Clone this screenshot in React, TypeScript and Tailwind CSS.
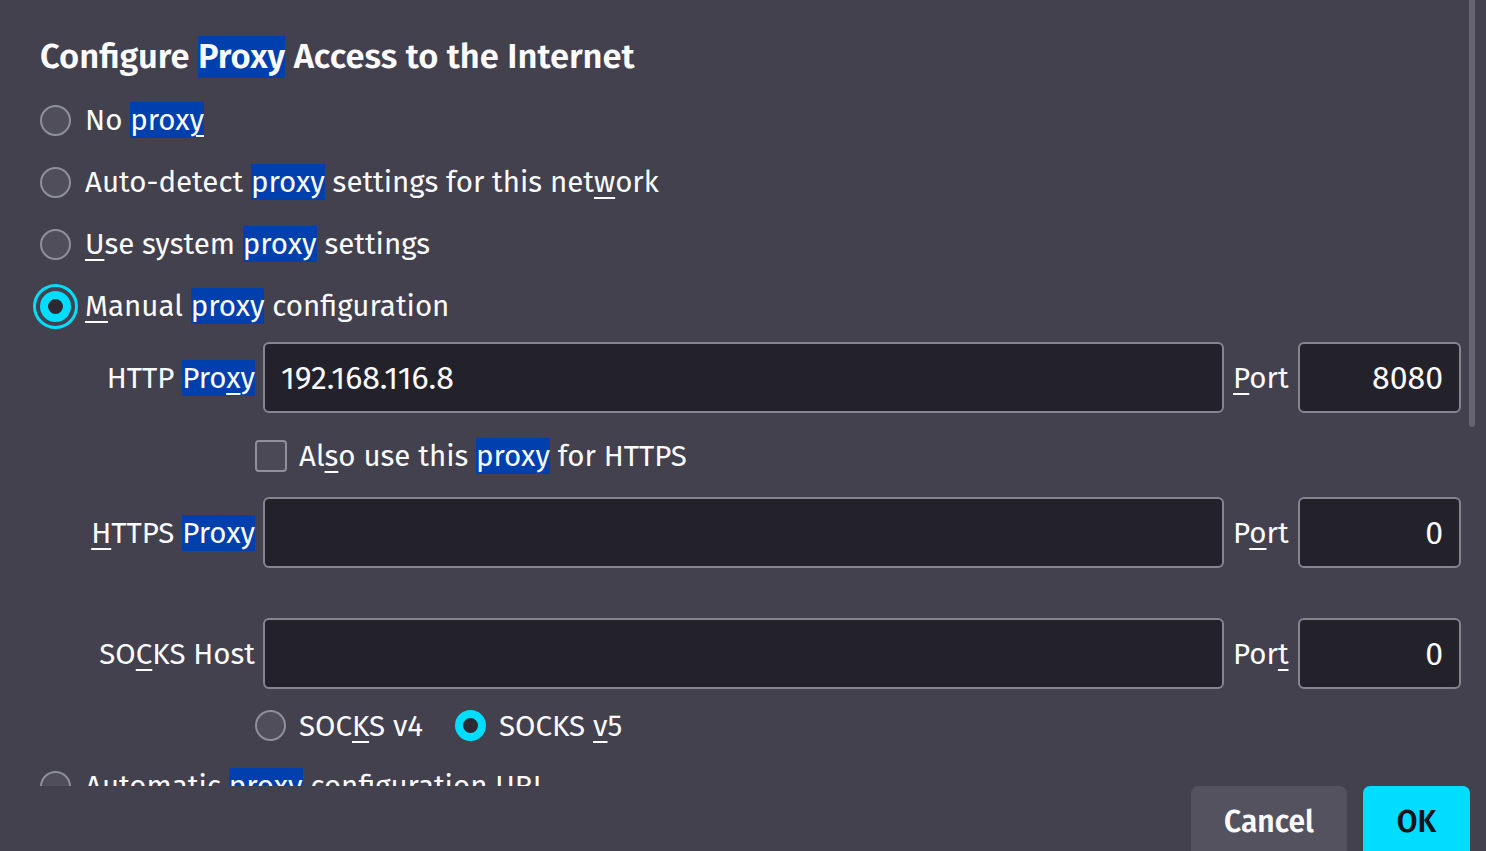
import React from "react";

const U = ({ children }: { children: React.ReactNode }) => (
  <span className="underline decoration-[#fbfbfe] decoration-2 underline-offset-[5px]">{children}</span>
);

const H = ({ children }: { children: React.ReactNode }) => (
  <span className="inline-block h-[36px] bg-[#0040ae] leading-[36px]">{children}</span>
);

function Radio({ checked = false, focused = false }: { checked?: boolean; focused?: boolean }) {
  if (checked) {
    return (
      <span
        className={
          focused
            ? "block h-[31px] w-[31px] shrink-0 rounded-full border-[8px] border-[#00ddff] bg-[#2b2a33] outline-solid outline-[3px] outline-[#00ddff] outline-offset-[4px]"
            : "block h-[31px] w-[31px] shrink-0 rounded-full border-[8px] border-[#00ddff] bg-[#2b2a33]"
        }
      />
    );
  }
  return <span className="block h-[31px] w-[31px] shrink-0 rounded-full border-2 border-[#8f8f9d] bg-[#4f4e5a]" />;
}

function Field({ value, right = false }: { value?: string; right?: boolean }) {
  return (
    <div
      className={
        right
          ? "flex h-full w-[163px] shrink-0 items-center justify-end rounded-[6px] border-2 border-[#86858f] bg-[#23222b] px-[16px] text-[32px]"
          : "flex h-full flex-1 items-center rounded-[6px] border-2 border-[#86858f] bg-[#23222b] px-[16px] text-[32px]"
      }
    >
      {value}
    </div>
  );
}

function ProxyRow({ label, value, port, portLabel }: { label: React.ReactNode; value?: string; port: string; portLabel: React.ReactNode }) {
  return (
    <div className="flex h-[71px] items-center">
      <div className="w-[215px] shrink-0 whitespace-nowrap text-right leading-[36px]">{label}</div>
      <div className="ml-[8px] flex h-full flex-1">
        <Field value={value} />
      </div>
      <div className="ml-[9px] w-[57px] shrink-0 leading-[36px]">{portLabel}</div>
      <div className="ml-[8px] h-full">
        <Field value={port} right />
      </div>
    </div>
  );
}

export default function App() {
  return (
    <div className="flex h-[851px] w-[1486px] flex-col overflow-hidden bg-[#42414d] font-['Fira_Sans','Noto_Sans',sans-serif] text-[29.5px] text-[#fbfbfe]">
      <div className="relative h-[786px] shrink-0 overflow-hidden">
        <div className="pl-[40px] pr-[25px] pt-[36px]">
          <div className="h-[42px] whitespace-nowrap text-[34.5px] font-semibold leading-[42px]">
            Configure <span className="inline-block h-[42px] bg-[#0040ae] leading-[42px]">Proxy</span> Access to the Internet
          </div>

          <div className="mt-[11px]">
            <div className="flex h-[62px] items-center gap-[14px]">
              <Radio />
              <span className="leading-[36px]">
                No <H>prox<U>y</U></H>
              </span>
            </div>
            <div className="flex h-[62px] items-center gap-[14px]">
              <Radio />
              <span className="leading-[36px]">
                Auto-detect <H>proxy</H> settings for this net<U>w</U>ork
              </span>
            </div>
            <div className="flex h-[62px] items-center gap-[14px]">
              <Radio />
              <span className="leading-[36px]">
                <U>U</U>se system <H>proxy</H> settings
              </span>
            </div>
            <div className="flex h-[62px] items-center gap-[14px]">
              <Radio checked focused />
              <span className="leading-[36px]">
                <U>M</U>anual <H>proxy</H> configuration
              </span>
            </div>
          </div>

          <div className="mt-[5px]">
            <ProxyRow
              label={
                <>
                  HTTP <H>Pro<U>x</U>y</H>
                </>
              }
              value="192.168.116.8"
              port="8080"
              portLabel={
                <>
                  <U>P</U>ort
                </>
              }
            />
          </div>

          <div className="ml-[215px] mt-[27px] flex h-[32px] items-center gap-[12px]">
            <span className="block h-[32px] w-[32px] shrink-0 rounded-[4px] border-2 border-[#8f8f9d] bg-[#4a4955]" />
            <span className="leading-[36px]">
              Al<U>s</U>o use this <H>proxy</H> for HTTPS
            </span>
          </div>

          <div className="mt-[25px]">
            <ProxyRow
              label={
                <>
                  <U>H</U>TTPS <H>Proxy</H>
                </>
              }
              port="0"
              portLabel={
                <>
                  P<U>o</U>rt
                </>
              }
            />
          </div>

          <div className="mt-[50px]">
            <ProxyRow
              label={
                <>
                  SO<U>C</U>KS Host
                </>
              }
              port="0"
              portLabel={
                <>
                  Por<U>t</U>
                </>
              }
            />
          </div>

          <div className="ml-[215px] mt-[21px] flex h-[31px] items-center">
            <div className="flex w-[200px] items-center">
              <Radio />
              <span className="ml-[13px] whitespace-nowrap leading-[36px]">
                SOC<U>K</U>S v4
              </span>
            </div>
            <Radio checked />
            <span className="ml-[13px] whitespace-nowrap leading-[36px]">
              SOCKS <U>v</U>5
            </span>
          </div>

          <div className="mt-[14px] flex h-[62px] items-center gap-[14px]">
            <Radio />
            <span className="whitespace-nowrap leading-[36px]">
              Automatic <H>proxy</H> configuration URL
            </span>
          </div>
        </div>

        <div className="absolute right-[11px] top-[-10px] h-[437px] w-[6px] rounded-full bg-[#65646f]" />
      </div>

      <div className="flex justify-end gap-[16px] pr-[16px]">
        <button className="h-[72px] w-[156px] rounded-[7px] bg-[#53525e] text-[30px] font-semibold text-[#fbfbfe]">Cancel</button>
        <button className="h-[72px] w-[107px] rounded-[7px] bg-[#00ddff] text-[30px] font-semibold text-[#15141a]">OK</button>
      </div>
    </div>
  );
}
